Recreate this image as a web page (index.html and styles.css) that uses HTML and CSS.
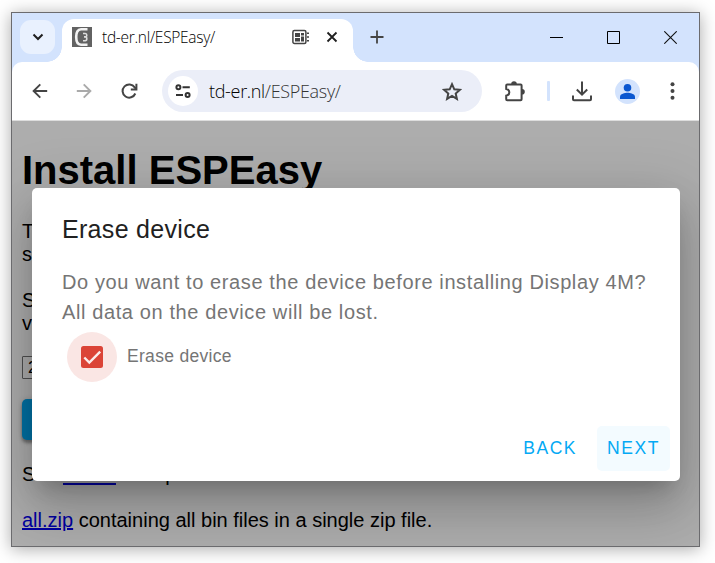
FILE: index.html
```html
<!DOCTYPE html>
<html lang="en">
<head>
<meta charset="utf-8">
<title>td-er.nl/ESPEasy/</title>
<link rel="stylesheet" href="styles.css">
</head>
<body>
<div class="window">
  <header class="tabstrip">
    <button class="tab-search"><svg width="12" height="8" viewBox="0 0 12 8"><path d="M1.500 1.500 6 6l4.500-4.500" fill="none" stroke="#1f1f1f" stroke-width="2"/></svg></button>
    <div class="tab">
      <svg class="favicon" width="20" height="20" viewBox="0 0 20 20"><rect width="20" height="20" fill="#626262"/><path d="M15.500 2.300H9Q4.200 2.500 4.200 10T9 17.700h6.500" fill="none" stroke="#f2f2f2" stroke-width="2.600"/><path d="M11 6.500h2.300q1.500 0 1.500 1.700t-1.500 1.700h-1.300 1.300q1.500 0 1.500 1.900t-1.500 1.900H11" fill="none" stroke="#ddd" stroke-width="1.600"/></svg>
      <span class="tab-title">td-er.nl/ESPEasy/</span>
      <svg class="chip" width="17" height="16" viewBox="0 0 17 16"><rect x=".9" y="1.400" width="13" height="13" rx="1.500" fill="none" stroke="#444" stroke-width="1.500"/><path d="M3 4h5v4H3zM9 4h3v2.500H9zM3 9h5v3.500H3zM9 7.500h3v5H9zM15 3.500h2V5h-2zM15 7.200h2v1.500h-2zM15 11h2v1.500h-2z" fill="#444"/></svg>
      <svg class="close-tab" width="12" height="12" viewBox="0 0 12 12"><path d="m1.500 1.500 9 9m0-9-9 9" stroke="#1f1f1f" stroke-width="1.800"/></svg>
    </div>
    <svg class="new-tab" width="14" height="14" viewBox="0 0 14 14"><path d="M7 .5v13M.5 7h13" stroke="#444" stroke-width="1.800"/></svg>
    <div class="controls">
      <svg width="13" height="13" viewBox="0 0 13 13"><path d="M0 6.500h13" stroke="#000"/></svg>
      <svg width="13" height="13" viewBox="0 0 13 13"><path d="M.5.5h12v12H.5z" fill="none" stroke="#000"/></svg>
      <svg width="13" height="13" viewBox="0 0 13 13"><path d="m.3.300 12.400 12.400m0-12.400L.3 12.700" stroke="#111" stroke-width="1.100"/></svg>
    </div>
  </header>
  <nav class="toolbar">
    <svg class="back" width="16" height="16" viewBox="0 0 16 16"><path d="M15.200 8H2M8.300 1.300 1.600 8l6.700 6.700" fill="none" stroke="#444" stroke-width="1.900"/></svg>
    <svg class="forward" width="16" height="16" viewBox="0 0 16 16"><path d="M.8 8H14M7.700 1.300 14.400 8l-6.700 6.700" fill="none" stroke="#aaa" stroke-width="1.900"/></svg>
    <svg class="reload" width="17" height="17" viewBox="0 0 17 17"><path d="M14.300 10.500A6.600 6.600 0 1 1 13.700 4.400L15 5.800" fill="none" stroke="#444" stroke-width="2"/><path d="M15.400.8v5.800H9.800" fill="none" stroke="#444" stroke-width="2"/></svg>
    <div class="address">
      <span class="site-info"><svg width="16" height="14" viewBox="0 0 16 14"><g fill="none" stroke="#333" stroke-width="2"><circle cx="3.400" cy="3.300" r="2"/><path d="M7.500 3.300h7.300M1 11h7"/><circle cx="12.600" cy="11" r="2"/></g></svg></span>
      <span class="url">td-er.nl<span class="path">/ESPEasy/</span></span>
      <svg class="star" width="20" height="19" viewBox="0 0 20 19"><path d="m10 2.200 2.300 5.100 5.600.5-4.200 3.700 1.200 5.400-4.900-2.900-4.900 2.900 1.200-5.400-4.200-3.700 5.600-.5z" fill="none" stroke="#444" stroke-width="2"/></svg>
    </div>
    <svg class="puzzle" width="22" height="22" viewBox="0 0 22 22"><path d="M4 4.500h12.600q1 0 1 1v13.700q0 1-1 1H3.200q-1 0-1-1v-3.500c4.200-.7 4.200-6 0-6.700V5.500q0-1 1-1z" fill="none" stroke="#444" stroke-width="2"/><path d="M7.200 4a2.800 2.800 0 0 1 5.600 0zM18 9a2.800 2.800 0 0 1 0 5.600z" fill="#444"/></svg>
    <span class="divider"></span>
    <svg class="download" width="20" height="21" viewBox="0 0 20 21"><path d="M10 .5v13M4.800 8.500l5.200 5.200 5.200-5.200M1 14.500v3.800q0 1 1 1h16q1 0 1-1v-3.800" fill="none" stroke="#444" stroke-width="2"/></svg>
    <svg class="profile" width="25" height="25" viewBox="0 0 25 25"><circle cx="12.500" cy="12.500" r="12.500" fill="#d3e3fd"/><circle cx="12.500" cy="8.700" r="3.800" fill="#0b57d0"/><path d="M5 20v-2.200c0-3 5-4 7.500-4s7.500 1 7.500 4V20z" fill="#0b57d0"/></svg>
    <svg class="menu" width="5" height="18" viewBox="0 0 5 18"><g fill="#444"><circle cx="2.500" cy="2.200" r="2"/><circle cx="2.500" cy="9" r="2"/><circle cx="2.500" cy="15.800" r="2"/></g></svg>
  </nav>
  <div class="viewport">
    <main class="page">
      <h1>Install ESPEasy</h1>
      <p class="intro">T<br>s</p>
      <p class="select-text">S<br>v</p>
      <div class="version">2</div>
      <div class="install"></div>
      <p class="see">S<a class="covered-link"></a><span>p</span></p>
      <p class="zip"><a>all.zip</a> containing all bin files in a single zip file.</p>
    </main>
    <div class="scrim">
      <section class="dialog">
        <h2>Erase device</h2>
        <p>Do you want to erase the device before installing Display 4M?<br>All data on the device will be lost.</p>
        <label class="option">
          <span class="ripple"><svg width="22" height="22" viewBox="0 0 22 22"><rect width="22" height="22" rx="2.500" fill="#db4437"/><path d="m3.300 11.500 5 5L19.200 5.600" fill="none" stroke="#fbeceb" stroke-width="2.400"/></svg></span>
          <span class="option-text">Erase device</span>
        </label>
        <div class="actions"><button>BACK</button><button class="focused">NEXT</button></div>
      </section>
    </div>
  </div>
</div>
</body>
</html>
```
FILE: styles.css
```css
* { box-sizing: border-box; }
body { margin: 0; padding: 12px 0 0 11px; height: 563px; overflow: hidden; background: #fff; font-family: "Liberation Sans", Arial, sans-serif; }
svg { display: block; flex: none; }
button { border: 0; background: none; font: inherit; padding: 0; }
.window { width: 689px; height: 535px; border: 1px solid #6b6b6e; display: flex; flex-direction: column; box-shadow: 0 2px 16px rgba(0,0,0,.34); background: #d3e3fd; }
.tabstrip { height: 49px; display: flex; align-items: flex-start; padding-left: 8px; flex: none; }
.tab-search { width: 35px; height: 34px; margin-top: 7px; border-radius: 11px; background: #e9f1fe; display: grid; place-items: center; }
.tab { position: relative; width: 291px; height: 43px; margin: 6px 0 0 7px; background: #fff; border-radius: 12px 12px 0 0; display: flex; align-items: center; padding: 0 14px 7px 10px; }
.tab::before, .tab::after { content: ""; position: absolute; bottom: 0; width: 15px; height: 15px; }
.tab::before { left: -15px; background: radial-gradient(circle at 0 0, transparent 14.500px, #fff 15px); }
.tab::after { right: -15px; background: radial-gradient(circle at 100% 0, transparent 14.500px, #fff 15px); }
.tab-title, .url { font-family: "Open Sans", "Noto Sans", sans-serif; font-weight: 300; white-space: nowrap; color: #000; }
.tab-title { margin-left: 10px; font-size: 15.500px; letter-spacing: -.3px; width: 190px; }
.chip { margin-right: 17px; }
.new-tab { margin: 17px 0 0 17px; }
.controls { margin-left: auto; margin-right: 22px; margin-top: 18px; display: flex; gap: 44px; }
.toolbar { height: 59px; flex: none; background: #fff; border-bottom: 1px solid #ddd; border-radius: 10px 10px 0 0; display: flex; align-items: center; padding-left: 20px; }
.forward { margin-left: 28px; }
.reload { margin-left: 29px; }
.address { width: 320px; height: 42px; margin-left: 24px; border-radius: 21px; background: #ebeef8; display: flex; align-items: center; padding: 0 20px 0 6px; }
.site-info { width: 30px; height: 30px; border-radius: 50%; background: #fff; display: grid; place-items: center; }
.url { margin-left: 11px; font-size: 18px; letter-spacing: -.32px; }
.path { color: #333; }
.star { margin-left: auto; }
.puzzle { margin-left: 22px; }
.divider { width: 3px; height: 20px; margin-left: 21px; background: #d3e3fd; border-radius: 1px; }
.download { margin-left: 22px; }
.profile { margin-left: 23px; }
.menu { margin-left: 30px; }
.viewport { position: relative; flex: 1; overflow: hidden; background: #fff; }
.page { padding: 26px 10px 0; font-size: 20px; line-height: 23px; }
.page h1 { margin: 0 0 27px; font-size: 40px; line-height: 46px; }
.page p { margin: 0; white-space: nowrap; }
.page a { color: #00e; text-decoration: underline; }
.page .select-text { margin-top: 23px; }
.version { width: 90px; height: 23px; margin-top: 21px; border: 1px solid #767676; padding: 0 5px; font-size: 16.700px; line-height: 21px; border-radius: 1px; }
.install { width: 120px; height: 41px; margin-top: 20px; border-radius: 5px; background: #03a9f4; box-shadow: 0 3px 3px rgba(0,0,0,.3), 0 1px 6px rgba(0,0,0,.2); }
.page .see { margin-top: 23px; display: flex; }
.covered-link { width: 53px; height: 23px; margin: -1px 49px 0 28px; border-bottom: 2px solid #00e; }
.page .zip { margin-top: 23px; }
.scrim { position: absolute; inset: 0; background: rgba(0,0,0,.32); padding: 67px 0 0 20px; }
.dialog { width: 648px; height: 293px; background: #fff; border-radius: 5px; display: flex; flex-direction: column; box-shadow: 0 14px 19px -9px rgba(0,0,0,.2), 0 30px 48px 4px rgba(0,0,0,.14), 0 11px 58px 10px rgba(0,0,0,.12); }
.dialog h2 { margin: 21px 0 0 30px; font-size: 25px; line-height: 40px; font-weight: 400; letter-spacing: .31px; color: #212121; }
.dialog p { margin: 18px 0 0 30px; font-size: 20px; line-height: 30px; letter-spacing: .61px; color: #757575; white-space: nowrap; }
.option { display: flex; align-items: center; margin: 5px 0 0 35px; gap: 10px; font-size: 17.500px; letter-spacing: .31px; color: #757575; }
.option-text { padding-bottom: 2px; }
.ripple { width: 50px; height: 50px; border-radius: 50%; background: #fae6e4; display: grid; place-items: center; }
.actions { margin: auto 10px 10px 0; display: flex; justify-content: flex-end; gap: 10px; }
.actions button { height: 45px; padding: 0 10px; font-size: 17.500px; letter-spacing: 1.560px; color: #03a9f4; border-radius: 5px; }
.actions .focused { background: #f3fbff; }
```
